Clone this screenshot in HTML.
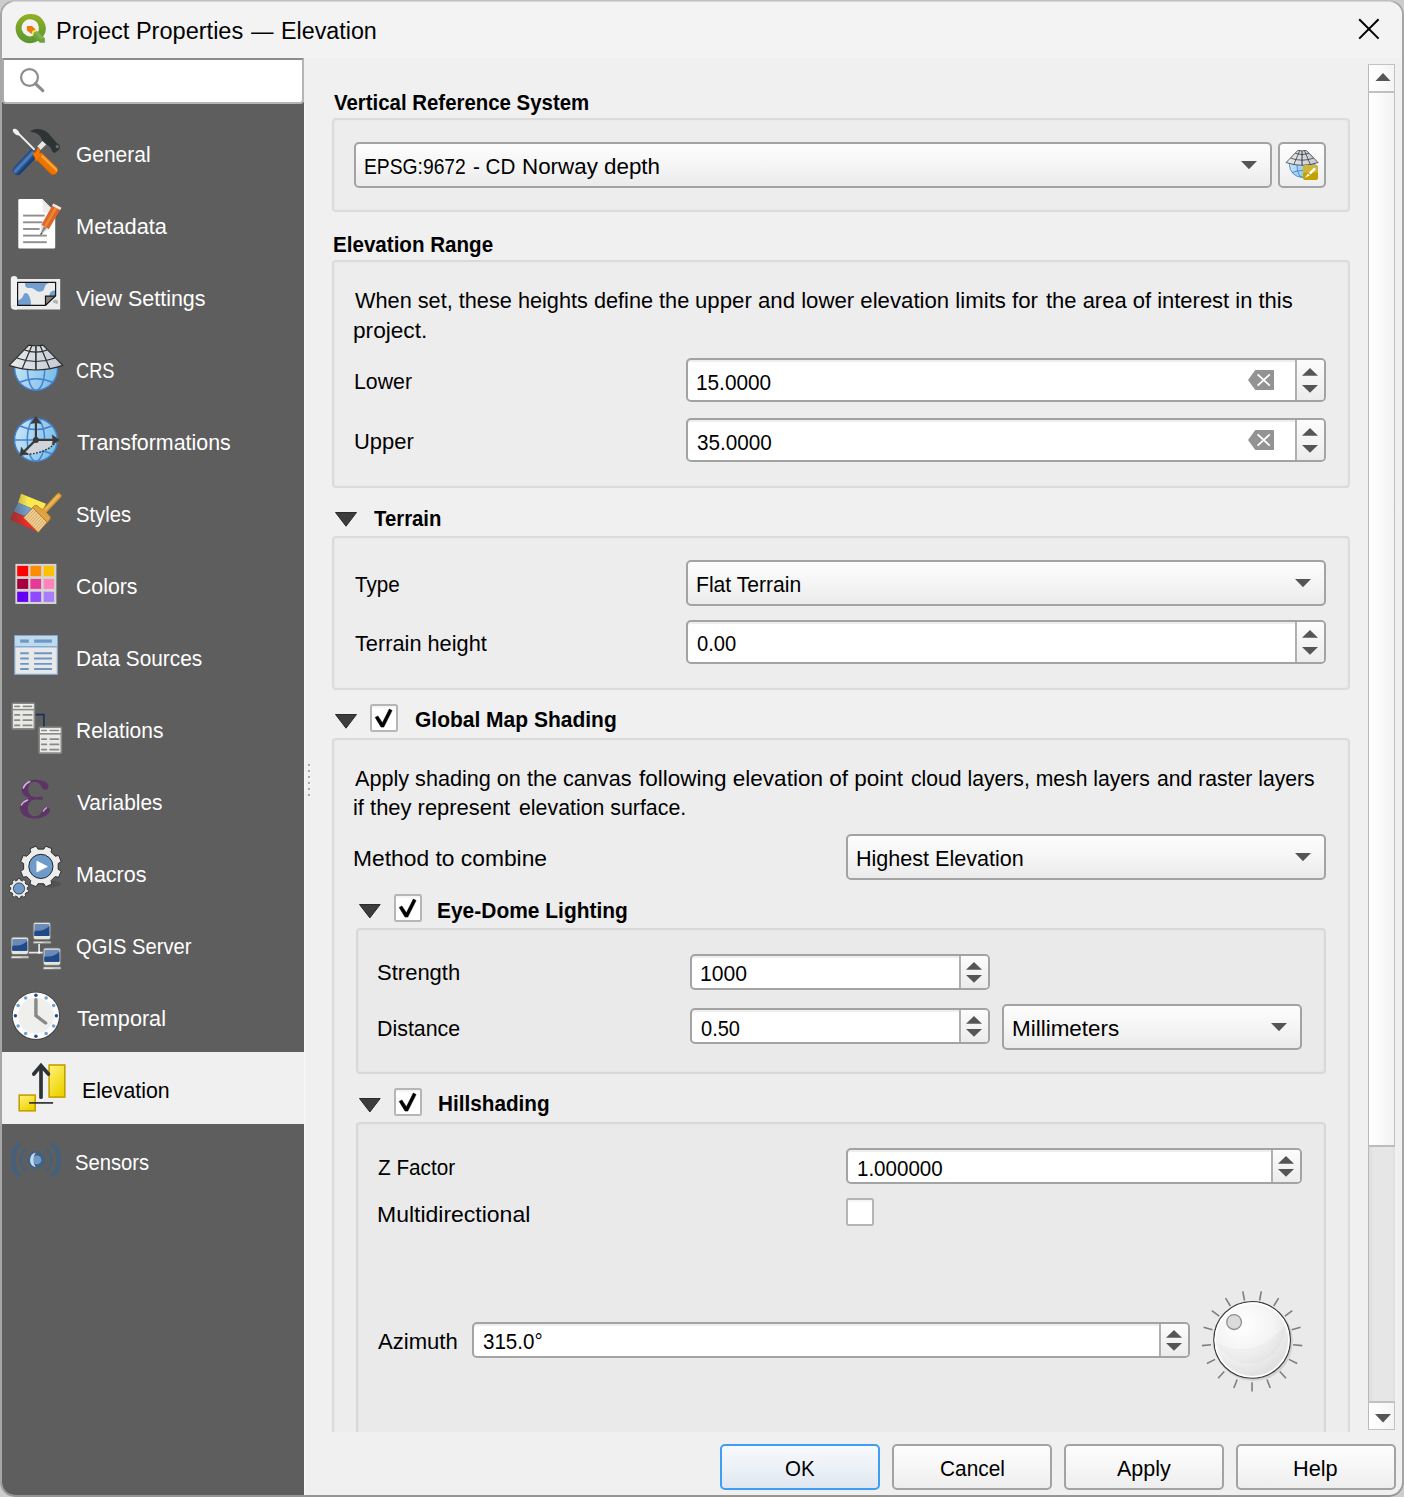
<!DOCTYPE html>
<html>
<head>
<meta charset="utf-8">
<title>Project Properties — Elevation</title>
<style>
html,body{margin:0;padding:0;}
body{width:1404px;height:1497px;overflow:hidden;background:#cdcdcd;font-family:"Liberation Sans",sans-serif;}
#root{position:absolute;left:0;top:0;width:1404px;height:1497px;overflow:hidden;}
#root div,#root span,#root svg{position:absolute;box-sizing:border-box;}
.t{white-space:pre;line-height:1;color:#000;transform-origin:0 0;}
#win{left:0;top:0;width:1404px;height:1497px;border-radius:15px;background:linear-gradient(#c2c2c2 0,#a6a6a6 4px,#a6a6a6 1480px,#949494);overflow:hidden;}
#inner{left:2px;top:2px;width:1400px;height:1492.5px;border-radius:13px;background:#f0f0f0;overflow:hidden;}
#titlebar{left:0;top:0;width:1400px;height:56px;background:#f3f3f3;}
#side{left:0;top:100px;width:302px;height:1400px;background:#5e5e5e;}
#sel{left:0;top:1050px;width:302px;height:72px;background:#f0f0f0;}
#search{left:0;top:56px;width:302px;height:46px;background:#fff;border:2px solid #b4b4b4;border-top:2px solid #8c8c8c;border-left-color:#ababab;border-radius:1px 1px 4px 4px;}
.gb{background:rgba(0,0,0,0.0125);border:2px solid rgba(0,0,0,0.08);border-radius:4px;box-shadow:inset 0 0 3px rgba(0,0,0,0.05);}
.combo{border:2px solid #a3a3a3;border-radius:5px;background:linear-gradient(#fdfdfd,#f6f6f6 45%,#ebebeb);}
.spin{border:2px solid #a3a3a3;border-radius:5px;background:#fff;box-shadow:inset 0 2px 1px rgba(0,0,0,0.07);}
.spin .sb{top:0;right:0;bottom:0;border-left:2px solid #b0b0b0;background:linear-gradient(#fcfcfc,#ececec);border-radius:0 3px 3px 0;}
.btn{border:2px solid #a3a3a3;border-radius:5px;background:linear-gradient(#fdfdfd,#f7f7f7 45%,#eeeeee);}
.cb{width:28px;height:28px;background:#fff;border:2px solid #b6b6b6;border-radius:2.5px;box-shadow:inset 0 2px 1px rgba(0,0,0,0.04);}
</style>
</head>
<body>
<div id="root">
<div id="win"><div id="tb2" style="left:13px;top:1px;width:1378px;height:1px;background:#f3f3f3;opacity:0.55"></div><div id="inner">
<div id="titlebar"></div>
<div id="side"></div>
<div id="sel"></div>
<div id="search"></div>
</div></div>
<!-- scroll area clip: x 304..1397 y 58..1432 -->
<div id="sa" style="left:304px;top:58px;width:1094px;height:1374px;overflow:hidden;">
<div id="sc" style="left:-304px;top:-58px;width:1404px;height:1600px;">
<div class="gb" style="left:332px;top:118px;width:1018px;height:94px;"></div>
<div class="gb" style="left:332px;top:260px;width:1018px;height:228px;"></div>
<div class="gb" style="left:332px;top:536px;width:1018px;height:154px;"></div>
<div class="gb" style="left:332px;top:738px;width:1018px;height:760px;"></div>
<div class="gb" style="left:356px;top:928px;width:970px;height:146px;"></div>
<div class="gb" style="left:356px;top:1122px;width:970px;height:360px;"></div>
</div></div>
<div id="sa2" style="left:304px;top:58px;width:1094px;height:1374px;overflow:hidden;"><div style="left:-304px;top:-58px;width:1404px;height:1600px;">
<div class="combo" style="left:354px;top:142px;width:918.00px;height:46.00px"></div>
<svg style="left:1241.00px;top:160.90px;width:16px;height:8.2px" viewBox="0 0 16 8.2"><path d="M0 0H16L8.0 8.2Z" fill="#555555"/></svg>
<div class="btn" style="left:1278px;top:142px;width:48px;height:46px"></div>
<div class="spin" style="left:686px;top:358px;width:640.00px;height:44.00px"><div class="sb" style="width:29.00px"></div></div>
<svg style="left:1302.00px;top:368.10px;width:16px;height:7.8px" viewBox="0 0 16 7.8"><path d="M0 7.8H16L8.0 0Z" fill="#555555"/></svg>
<svg style="left:1302.00px;top:385.10px;width:16px;height:7.8px" viewBox="0 0 16 7.8"><path d="M0 0H16L8.0 7.8Z" fill="#555555"/></svg>
<svg style="left:1248px;top:370px;width:26px;height:20px" viewBox="0 0 26 20"><path d="M7.3 0H25.6a0.4 0.4 0 0 1 0.4 0.4V19.6a0.4 0.4 0 0 1-0.4 0.4H7.3L0 10Z" fill="#939393"/><path d="M9.6 4.4L21.8 15.6M21.8 4.4L9.6 15.6" stroke="#fff" stroke-width="1.9" fill="none"/></svg>
<div class="spin" style="left:686px;top:418px;width:640.00px;height:44.00px"><div class="sb" style="width:29.00px"></div></div>
<svg style="left:1302.00px;top:428.10px;width:16px;height:7.8px" viewBox="0 0 16 7.8"><path d="M0 7.8H16L8.0 0Z" fill="#555555"/></svg>
<svg style="left:1302.00px;top:445.10px;width:16px;height:7.8px" viewBox="0 0 16 7.8"><path d="M0 0H16L8.0 7.8Z" fill="#555555"/></svg>
<svg style="left:1248px;top:430px;width:26px;height:20px" viewBox="0 0 26 20"><path d="M7.3 0H25.6a0.4 0.4 0 0 1 0.4 0.4V19.6a0.4 0.4 0 0 1-0.4 0.4H7.3L0 10Z" fill="#939393"/><path d="M9.6 4.4L21.8 15.6M21.8 4.4L9.6 15.6" stroke="#fff" stroke-width="1.9" fill="none"/></svg>
<div class="combo" style="left:686px;top:560px;width:640.00px;height:46.00px"></div>
<svg style="left:1295.00px;top:578.90px;width:16px;height:8.2px" viewBox="0 0 16 8.2"><path d="M0 0H16L8.0 8.2Z" fill="#555555"/></svg>
<div class="spin" style="left:686px;top:620px;width:640.00px;height:44.00px"><div class="sb" style="width:29.00px"></div></div>
<svg style="left:1302.00px;top:630.10px;width:16px;height:7.8px" viewBox="0 0 16 7.8"><path d="M0 7.8H16L8.0 0Z" fill="#555555"/></svg>
<svg style="left:1302.00px;top:647.10px;width:16px;height:7.8px" viewBox="0 0 16 7.8"><path d="M0 0H16L8.0 7.8Z" fill="#555555"/></svg>
<div class="combo" style="left:846px;top:834px;width:480.00px;height:46.00px"></div>
<svg style="left:1295.00px;top:852.90px;width:16px;height:8.2px" viewBox="0 0 16 8.2"><path d="M0 0H16L8.0 8.2Z" fill="#555555"/></svg>
<div class="spin" style="left:690px;top:954px;width:300.00px;height:36.00px"><div class="sb" style="width:29.00px"></div></div>
<svg style="left:966.00px;top:962.10px;width:16px;height:7.8px" viewBox="0 0 16 7.8"><path d="M0 7.8H16L8.0 0Z" fill="#555555"/></svg>
<svg style="left:966.00px;top:975.10px;width:16px;height:7.8px" viewBox="0 0 16 7.8"><path d="M0 0H16L8.0 7.8Z" fill="#555555"/></svg>
<div class="spin" style="left:690px;top:1008px;width:300.00px;height:36.00px"><div class="sb" style="width:29.00px"></div></div>
<svg style="left:966.00px;top:1016.10px;width:16px;height:7.8px" viewBox="0 0 16 7.8"><path d="M0 7.8H16L8.0 0Z" fill="#555555"/></svg>
<svg style="left:966.00px;top:1029.10px;width:16px;height:7.8px" viewBox="0 0 16 7.8"><path d="M0 0H16L8.0 7.8Z" fill="#555555"/></svg>
<div class="combo" style="left:1002px;top:1004px;width:300.00px;height:46.00px"></div>
<svg style="left:1271.00px;top:1022.90px;width:16px;height:8.2px" viewBox="0 0 16 8.2"><path d="M0 0H16L8.0 8.2Z" fill="#555555"/></svg>
<div class="spin" style="left:846px;top:1148px;width:456.00px;height:36.00px"><div class="sb" style="width:29.00px"></div></div>
<svg style="left:1278.00px;top:1156.10px;width:16px;height:7.8px" viewBox="0 0 16 7.8"><path d="M0 7.8H16L8.0 0Z" fill="#555555"/></svg>
<svg style="left:1278.00px;top:1169.10px;width:16px;height:7.8px" viewBox="0 0 16 7.8"><path d="M0 0H16L8.0 7.8Z" fill="#555555"/></svg>
<div class="cb" style="left:846px;top:1198px"></div>
<div class="spin" style="left:472px;top:1322px;width:718.00px;height:36.00px"><div class="sb" style="width:29.00px"></div></div>
<svg style="left:1166.00px;top:1330.10px;width:16px;height:7.8px" viewBox="0 0 16 7.8"><path d="M0 7.8H16L8.0 0Z" fill="#555555"/></svg>
<svg style="left:1166.00px;top:1343.10px;width:16px;height:7.8px" viewBox="0 0 16 7.8"><path d="M0 0H16L8.0 7.8Z" fill="#555555"/></svg>
<svg style="left:335px;top:512.3px;width:22px;height:14.700000000000045px" viewBox="0 0 22 14.700000000000045"><path d="M0.5 0.5H21.5L11.0 14.200000000000045Z" fill="#3c3c3c" stroke="#2a2a2a" stroke-width="1" stroke-linejoin="round"/></svg>
<svg style="left:335px;top:714.3px;width:22px;height:14.700000000000045px" viewBox="0 0 22 14.700000000000045"><path d="M0.5 0.5H21.5L11.0 14.200000000000045Z" fill="#3c3c3c" stroke="#2a2a2a" stroke-width="1" stroke-linejoin="round"/></svg>
<svg style="left:359.3px;top:904.2px;width:21.69999999999999px;height:14.399999999999977px" viewBox="0 0 21.69999999999999 14.399999999999977"><path d="M0.5 0.5H21.19999999999999L10.849999999999994 13.899999999999977Z" fill="#3c3c3c" stroke="#2a2a2a" stroke-width="1" stroke-linejoin="round"/></svg>
<svg style="left:359.3px;top:1098.2px;width:21.69999999999999px;height:14.5px" viewBox="0 0 21.69999999999999 14.5"><path d="M0.5 0.5H21.19999999999999L10.849999999999994 14.0Z" fill="#3c3c3c" stroke="#2a2a2a" stroke-width="1" stroke-linejoin="round"/></svg>
<div class="cb" style="left:370px;top:704px"></div>
<svg style="left:370px;top:704px;width:28px;height:28px" viewBox="0 0 28 28"><path d="M5.15 13.4L7.9 11.9L12.4 18.8L19.3 5.0L22.1 6.5L13.8 23.1H11.0Z" fill="#000" stroke="#000" stroke-width="0.5" stroke-linejoin="round"/></svg>
<div class="cb" style="left:394px;top:894px"></div>
<svg style="left:394px;top:894px;width:28px;height:28px" viewBox="0 0 28 28"><path d="M5.15 13.4L7.9 11.9L12.4 18.8L19.3 5.0L22.1 6.5L13.8 23.1H11.0Z" fill="#000" stroke="#000" stroke-width="0.5" stroke-linejoin="round"/></svg>
<div class="cb" style="left:394px;top:1088px"></div>
<svg style="left:394px;top:1088px;width:28px;height:28px" viewBox="0 0 28 28"><path d="M5.15 13.4L7.9 11.9L12.4 18.8L19.3 5.0L22.1 6.5L13.8 23.1H11.0Z" fill="#000" stroke="#000" stroke-width="0.5" stroke-linejoin="round"/></svg>
</div></div>
<div style="left:1368px;top:64px;width:27px;height:1366px;background:linear-gradient(90deg,#dcdcdc 0,#e6e6e6 4px,#e6e6e6 22px,#dedede 27px);border-left:1px solid #b9b9b9"></div>
<div style="left:1368px;top:91px;width:27px;height:1056px;background:linear-gradient(90deg,#ffffff,#fbfbfb 40%,#f2f2f2);border:1px solid #bebebe;border-bottom:2px solid #bcbcbc;border-left-color:#b9b9b9"></div>
<div style="left:1368px;top:64px;width:27px;height:28.8px;background:linear-gradient(90deg,#ffffff,#fbfbfb 40%,#f4f4f4);border:1px solid #c2c2c2;border-bottom:2px solid #c0c0c0;border-left-color:#b9b9b9"></div>
<div style="left:1368px;top:1401px;width:27px;height:29.4px;background:linear-gradient(90deg,#ffffff,#fbfbfb 40%,#f4f4f4);border:1px solid #c2c2c2;border-top:2px solid #c0c0c0;border-left-color:#b9b9b9"></div>
<svg style="left:1375.00px;top:72.75px;width:16px;height:8.5px" viewBox="0 0 16 8.5"><path d="M0 8.5H16L8.0 0Z" fill="#555555"/></svg>
<svg style="left:1375.00px;top:1414.35px;width:16px;height:8.5px" viewBox="0 0 16 8.5"><path d="M0 0H16L8.0 8.5Z" fill="#555555"/></svg>
<div class="btn" style="left:720px;top:1444px;width:160.00px;height:46px;border-color:#3d9ef5;background:linear-gradient(#f7fafd,#edf2f8 45%,#dfe7f0)"></div>
<div class="btn" style="left:892px;top:1444px;width:160.00px;height:46px"></div>
<div class="btn" style="left:1064px;top:1444px;width:160.00px;height:46px"></div>
<div class="btn" style="left:1236px;top:1444px;width:160.00px;height:46px"></div>
<svg style="left:1357px;top:17px;width:24px;height:24px" viewBox="0 0 24 24"><path d="M2.2 2.2L21.6 21.6M21.6 2.2L2.2 21.6" stroke="#000" stroke-width="2" fill="none"/></svg>
<svg style="left:16px;top:64px;width:32px;height:32px" viewBox="0 0 32 32"><circle cx="13.5" cy="13.5" r="8.4" fill="none" stroke="#8c8c8c" stroke-width="2.2"/><path d="M19.4 19.6L26.8 26.7" stroke="#8c8c8c" stroke-width="3.2" stroke-linecap="round"/></svg>
<div style="left:309px;top:765px;width:2px;height:2px;background:#f9f9f9"></div>
<div style="left:308px;top:764px;width:2px;height:2px;background:#a6a6a6"></div>
<div style="left:309px;top:771px;width:2px;height:2px;background:#f9f9f9"></div>
<div style="left:308px;top:770px;width:2px;height:2px;background:#a6a6a6"></div>
<div style="left:309px;top:777px;width:2px;height:2px;background:#f9f9f9"></div>
<div style="left:308px;top:776px;width:2px;height:2px;background:#a6a6a6"></div>
<div style="left:309px;top:783px;width:2px;height:2px;background:#f9f9f9"></div>
<div style="left:308px;top:782px;width:2px;height:2px;background:#a6a6a6"></div>
<div style="left:309px;top:789px;width:2px;height:2px;background:#f9f9f9"></div>
<div style="left:308px;top:788px;width:2px;height:2px;background:#a6a6a6"></div>
<div style="left:309px;top:795px;width:2px;height:2px;background:#f9f9f9"></div>
<div style="left:308px;top:794px;width:2px;height:2px;background:#a6a6a6"></div>
<div style="left:304px;top:104px;width:1px;height:1391px;background:#f8f8f8"></div>
<svg style="left:0;top:0;width:0;height:0"><defs>
<linearGradient id="gGlobe" x1="0" y1="0" x2="1" y2="0.3"><stop offset="0" stop-color="#cfe9fa"/><stop offset="1" stop-color="#7fc0ea"/></linearGradient>
<linearGradient id="gCone" x1="0" y1="0" x2="1" y2="0"><stop offset="0" stop-color="#e9ebef"/><stop offset="0.5" stop-color="#d5d9e0"/><stop offset="1" stop-color="#c4c9d2"/></linearGradient>
<linearGradient id="gYel" x1="0" y1="0" x2="0.6" y2="1"><stop offset="0" stop-color="#fff27e"/><stop offset="1" stop-color="#edd400"/></linearGradient>
<linearGradient id="gBlueH" x1="0" y1="0" x2="1" y2="1"><stop offset="0" stop-color="#3b6db0"/><stop offset="0.35" stop-color="#5a8ac6"/><stop offset="0.6" stop-color="#204a87"/><stop offset="1" stop-color="#173a6e"/></linearGradient>
<linearGradient id="gOrH" x1="0" y1="1" x2="1" y2="0"><stop offset="0" stop-color="#e06a00"/><stop offset="0.45" stop-color="#f57900"/><stop offset="0.7" stop-color="#fcaa3a"/><stop offset="1" stop-color="#ef7400"/></linearGradient>
<linearGradient id="gBlueV" x1="0" y1="0" x2="0" y2="1"><stop offset="0" stop-color="#17386b"/><stop offset="0.3" stop-color="#204a87"/><stop offset="0.62" stop-color="#5484c4"/><stop offset="0.8" stop-color="#3465a4"/><stop offset="1" stop-color="#204a87"/></linearGradient>
<linearGradient id="gOrV" x1="0" y1="0" x2="0" y2="1"><stop offset="0" stop-color="#f08000"/><stop offset="0.25" stop-color="#fdb04a"/><stop offset="0.45" stop-color="#f57900"/><stop offset="0.75" stop-color="#ef7400"/><stop offset="1" stop-color="#e06a00"/></linearGradient>
<linearGradient id="gQ" x1="0" y1="0" x2="0" y2="1"><stop offset="0" stop-color="#93b023"/><stop offset="1" stop-color="#589632"/></linearGradient>
<linearGradient id="gScr" x1="0" y1="0" x2="0" y2="1"><stop offset="0" stop-color="#6e8cba"/><stop offset="0.5" stop-color="#6a88b6"/><stop offset="0.62" stop-color="#244c8a"/><stop offset="1" stop-color="#1f4683"/></linearGradient>
<linearGradient id="gStripe" x1="0" y1="0" x2="1" y2="0"><stop offset="0" stop-color="#3a3a3a" stop-opacity="0.5"/><stop offset="0.75" stop-color="#3a3a3a" stop-opacity="0"/></linearGradient>
<radialGradient id="gDial" cx="0.38" cy="0.3" r="0.75"><stop offset="0" stop-color="#ffffff"/><stop offset="0.55" stop-color="#f3f3f3"/><stop offset="1" stop-color="#dcdcdc"/></radialGradient>
<symbol id="crs" viewBox="0 0 64 64">
<circle cx="32.1" cy="32.8" r="21.4" fill="url(#gGlobe)" stroke="#4581cc" stroke-width="1.5"/>
<ellipse cx="32.1" cy="32.8" rx="8.6" ry="21.4" fill="none" stroke="#4581cc" stroke-width="1.5"/>
<path d="M15 46.5Q32 39 49.2 46.5" fill="none" stroke="#4581cc" stroke-width="1.5"/>
<path d="M24.8 9.1Q32 10.4 39 9.1L58.8 29.4Q32 38.6 5.2 29.4Z" fill="url(#gCone)" stroke="#2c2c2c" stroke-width="1.2" stroke-linejoin="round"/>
<path d="M31.9 10V34" stroke="#3a3a3a" stroke-width="1.7" fill="none"/>
<path d="M27.8 9.8L18.2 32.7M36.2 9.8L45.8 32.7M20.6 14Q32 18.4 43.4 14M12.8 22Q32 29 51.2 22" stroke="#2c2c2c" stroke-width="1.2" fill="none"/>
</symbol>
</defs></svg>
<svg style="left:14.2px;top:13px;width:32px;height:32px" viewBox="0 0 32 32" ><path d="M16.2 1.0A14.6 14.6 0 1 0 16.2 30.2A14.6 14.6 0 0 0 24.5 27.6L19.8 22.6A8.6 8.6 0 1 1 24.8 15.6A8.6 8.6 0 0 1 23.6 20L28.6 24.6A14.6 14.6 0 0 0 16.2 1.0Z" fill="url(#gQ)"/>
<path d="M12.9 12.9H18L21.6 16.6L17.6 21.1L12.9 17.6Z" fill="#ee7913"/>
<path d="M18 12.9L21.6 16.6L18.3 17.9L17.6 21.1L19.2 22.5L20.0 19.4L23.2 18.2Z" fill="#f0e64a"/>
<path d="M23.2 18.2L20.0 19.4L19.2 22.5L25.8 29.7H30.9V25.6Z" fill="#6aa33a"/>
<path d="M23.2 18.2L20.0 19.4L26.5 26.2L30.9 25.6Z" fill="#80b050"/></svg>
<svg style="left:6px;top:122px;width:64px;height:64px" viewBox="0 0 64 64" ><path d="M25 8.6C30 5.8 37.5 6.4 42 11L49.3 19.2C50.6 21 51.6 21.9 53 22.6C54.6 24 54.2 27 52.4 28.3L49.4 30.4C47.6 31.2 46 30 45.6 27.8C44.6 24.6 42.2 23.2 40 22L36.2 18.6C35.4 14 31 10.4 26.4 10.2C25.2 10.1 24.4 9.2 25 8.6Z" fill="#2e3436"/>
<circle cx="51.3" cy="24.6" r="1.6" fill="#6b7072"/>
<path d="M36.4 19.0L40.2 22.4L34.6 28L31.2 24.6Z" fill="#e6e8e4"/>
<g transform="translate(28.6,30.4) rotate(133.4)"><path d="M0 -4.5H24.6A4.5 4.5 0 0 1 24.6 4.5H0Z" fill="url(#gBlueV)" stroke="#173a6e" stroke-width="0.5"/></g>
<path d="M12.6 11.8L28.6 27.8" stroke="#4a4a4a" stroke-width="3" fill="none"/>
<path d="M12.6 11.8L28.6 27.8" stroke="#ececec" stroke-width="2" fill="none"/>
<path d="M7.2 7.2C8.2 6.2 10.2 6.8 11.6 8.2C13 9.4 13.8 11 13.4 12.6L12.4 13.4C11 13.4 9.2 12.4 8 11C6.8 9.8 6.4 8 7.2 7.2Z" fill="#f2f2f2"/>
<g transform="translate(32.4,33.4) rotate(43.8)"><path d="M0 -4H22.4A4.9 4.9 0 0 1 22.4 4.9L0 4.4Z" fill="url(#gOrV)" stroke="#ce5c00" stroke-width="0.5"/><path d="M1 -0.6H23M1 1.4H23" stroke="#cf5f00" stroke-width="0.5" opacity="0.7"/></g>
<path d="M26.4 31.4L29.8 30L32.2 25.2L34.2 28.6L33.6 31.2L36 33L30 39.4L28.4 34.6Z" fill="#f57900" stroke="#ce5c00" stroke-width="0.5" stroke-linejoin="round"/></svg>
<svg style="left:6px;top:194px;width:64px;height:64px" viewBox="0 0 64 64" ><path d="M13.6 5H36.6L49.2 17.8V53.2A1.3 1.3 0 0 1 47.9 54.5H13.6A1.3 1.3 0 0 1 12.3 53.2V6.3A1.3 1.3 0 0 1 13.6 5Z" fill="#ffffff"/>
<path d="M36.6 5L49.2 17.8V18.6H38A1.4 1.4 0 0 1 36.6 17.2Z" fill="#ececec"/>
<path d="M36.5 6.2L48.6 18.4" stroke="#5e5e5e" stroke-width="0.1"/>
<path d="M36.2 4.6L49.6 18.2V4.6Z" fill="#5e5e5e"/>
<path d="M17.1 21.6H38.7" stroke="#8e8e8e" stroke-width="1.9"/><path d="M17.1 28.3H36.4" stroke="#8e8e8e" stroke-width="1.9"/><path d="M17.1 35.0H33.6" stroke="#8e8e8e" stroke-width="1.9"/><path d="M17.1 41.6H40.8" stroke="#8e8e8e" stroke-width="1.9"/><path d="M17.1 48.2H40.8" stroke="#8e8e8e" stroke-width="1.9"/>
<path d="M47.4 9.6L55.4 13.7L42.8 35.2L35.3 31Z" fill="#de6530"/>
<path d="M50.1 11L52.4 12.2L39.9 33.6L37.8 32.4Z" fill="#ee8a26"/>
<path d="M47.4 9.6L55.4 13.7L54.2 15.9L46.1 11.8Z" fill="#ececec"/>
<path d="M35.3 31L42.8 35.2L34.2 41.3Z" fill="#e4e4e4"/>
<path d="M37.6 32.3L40.6 34L34.2 41.3Z" fill="#8a8a8a"/>
<path d="M35.1 38.4L36.6 39.5L34.2 41.3Z" fill="#3a3a3a"/></svg>
<svg style="left:6px;top:266px;width:64px;height:64px" viewBox="0 0 64 64" ><path d="M8 13H54.2V43.5H8Z" fill="#ececec"/>
<path d="M4.8 13.4A3.2 3.2 0 0 1 11.4 13.4V43.5H8.2A3.4 3.4 0 0 1 4.8 40.1Z" fill="#f2f2f2"/>
<path d="M5 40.2Q8 39 11.4 40.3" stroke="#cfcfcf" stroke-width="0.6" fill="none"/>
<path d="M46.5 35.8q2.5-3.4 4.6-1.6q1.4 1.4 0.8 3.4q-1.6 0.8-2.2-0.4q-1.6 0.6-3.2-1.4Z" fill="#b4b4b4"/>
<path d="M11.6 16.3H49.6V29.8L39.6 39.3H11.6Z" fill="#ececec"/>
<path d="M19.2 16.8C18.6 20.6 20.6 22.6 24 22C27.6 21.4 29 24.6 32.4 25.6C36.4 26.4 38.2 24.2 38.6 21.6C39 18.6 41.6 17.6 43 16.8Z" fill="#729fcf"/>
<path d="M12 34.6C15.6 33 17 31.2 17.6 28.6C18.6 26.2 21.4 26.6 22.8 29.4C24.6 32.4 25.2 35.6 24.8 39H12Z" fill="#729fcf"/>
<path d="M49.2 24.6C45.6 24.4 43 27 43.6 30H49.2Z" fill="#729fcf"/>
<path d="M39.6 30.2H49.2L39.6 39.2Z" fill="#808080"/>
<path d="M11.6 16.3H49.6V29.8L39.6 39.3H11.6Z" fill="none" stroke="#141414" stroke-width="1.2" stroke-linejoin="round"/>
<path d="M49.4 30.2H39.5V39.2" fill="none" stroke="#141414" stroke-width="1.2"/></svg>
<svg style="left:4px;top:336px;width:64px;height:64px" viewBox="0 0 64 64"><use href="#crs" width="64" height="64"/></svg>
<svg style="left:4px;top:408px;width:64px;height:64px" viewBox="0 0 64 64" ><circle cx="31.9" cy="31.9" r="21.4" fill="url(#gGlobe)" stroke="#4581cc" stroke-width="1.5"/>
<ellipse cx="31.9" cy="31.9" rx="8.6" ry="21.4" fill="none" stroke="#4581cc" stroke-width="1.5"/>
<path d="M10.5 31.9H53.3M16 18Q32 25.2 47.8 18M16 45.8Q32 38.6 47.8 45.8" fill="none" stroke="#4581cc" stroke-width="1.5"/>
<path d="M31.9 31.9H52.5Q44 44.5 20 46.4Z" fill="#d3d4d8" stroke="none"/>
<path d="M52.5 33.4Q44 44.8 22.5 46.4" fill="none" stroke="#2a2a2a" stroke-width="1.3" stroke-dasharray="1.6 1.6"/>
<path d="M31.9 31.9V13M31.9 31.9H50M31.9 31.9L19.5 44" stroke="#3a3a3a" stroke-width="2.2" fill="none"/>
<circle cx="31.9" cy="31.9" r="3" fill="#3a3a3a"/>
<path d="M31.9 8.6L36.8 15.6Q32 13.8 27 15.6Z" fill="#3a3a3a" stroke="#3a3a3a" stroke-width="0.6" stroke-linejoin="round"/>
<path d="M55.2 31.9L48.2 36.8Q50 32 48.2 27Z" fill="#3a3a3a" stroke="#3a3a3a" stroke-width="0.6" stroke-linejoin="round"/>
<path d="M16 47.6L17.4 39.2Q19.6 43.8 24.4 46Z" fill="#3a3a3a" stroke="#3a3a3a" stroke-width="0.6" stroke-linejoin="round"/></svg>
<svg style="left:4px;top:480px;width:64px;height:64px" viewBox="0 0 64 64" ><path d="M17.1 13.7L42 23.8L39 30L27 28L14 22.8Z" fill="#fce94f"/>
<path d="M14 22.8L27 28L30 31L20 36L9.6 31.5Z" fill="#729fcf"/>
<path d="M9.6 31.5L20 36L34 52L6 39.6Z" fill="#ef2929"/>
<path d="M17.1 13.7L30 19L20 46L6 39.6Z" fill="url(#gStripe)"/>
<path d="M29.2 27.5L43.3 42L34.2 52.4L19.6 37.8Z" fill="#efcf98" stroke="#b07818" stroke-width="0.8" stroke-linejoin="round"/>
<path d="M30.8 29.1L21.2 39.4" stroke="#c9974e" stroke-width="0.7"/><path d="M32.3 30.7L22.8 41.0" stroke="#c9974e" stroke-width="0.7"/><path d="M33.9 32.3L24.5 42.7" stroke="#c9974e" stroke-width="0.7"/><path d="M35.5 33.9L26.1 44.3" stroke="#c9974e" stroke-width="0.7"/><path d="M37.0 35.6L27.7 45.9" stroke="#c9974e" stroke-width="0.7"/><path d="M38.6 37.2L29.3 47.5" stroke="#c9974e" stroke-width="0.7"/><path d="M40.2 38.8L31.0 49.2" stroke="#c9974e" stroke-width="0.7"/><path d="M41.7 40.4L32.6 50.8" stroke="#c9974e" stroke-width="0.7"/>
<path d="M28.6 27.4Q30.4 24.6 33 25.6L37 29Q38.4 29.8 39.4 28.6L52.6 14.2A2.6 2.6 0 0 1 56.6 17.6L42.4 32.4L45.8 36.2Q47 38 45.8 39.6L43.4 42.4Z" fill="#dfa545" stroke="#b07818" stroke-width="0.8" stroke-linejoin="round"/>
<path d="M41.4 29.4L54.6 15.4" stroke="#eec06e" stroke-width="1.2" fill="none"/></svg>
<svg style="left:4px;top:552px;width:64px;height:64px" viewBox="0 0 64 64" ><rect x="11.4" y="11.9" width="41" height="40.1" fill="#d4d4d2"/><rect x="13.2" y="13.9" width="11.0" height="10.3" fill="#ff0000"/><rect x="26.4" y="13.9" width="10.7" height="10.3" fill="#ff8c00"/><rect x="39.7" y="13.9" width="10.4" height="10.3" fill="#ffc000"/><rect x="13.2" y="26.9" width="11.0" height="10.0" fill="#a6003c"/><rect x="26.4" y="26.9" width="10.7" height="10.0" fill="#e63a96"/><rect x="39.7" y="26.9" width="10.4" height="10.0" fill="#ff82b8"/><rect x="13.2" y="39.7" width="11.0" height="10.2" fill="#6400f5"/><rect x="26.4" y="39.7" width="10.7" height="10.2" fill="#8f4bff"/><rect x="39.7" y="39.7" width="10.4" height="10.2" fill="#a87ffa"/></svg>
<svg style="left:4px;top:624px;width:64px;height:64px" viewBox="0 0 64 64" ><rect x="10.8" y="11.7" width="42.5" height="38.6" fill="#e8e8e8" stroke="#86acd6" stroke-width="1.1"/><rect x="11.3" y="12.2" width="41.5" height="10" fill="#bddbef"/><path d="M10.8 22.8H53.3" stroke="#86acd6" stroke-width="1.6"/><rect x="16.2" y="15.5" width="8.6" height="3.2" fill="#7098c4"/><rect x="30.1" y="15.5" width="17.8" height="3.2" fill="#7098c4"/><path d="M16.2 29.2H24.8M30.1 29.2H47.9" stroke="#6a96c8" stroke-width="1.9"/><path d="M16.2 34.5H24.8M30.1 34.5H47.9" stroke="#6a96c8" stroke-width="1.9"/><path d="M16.2 39.9H24.8M30.1 39.9H47.9" stroke="#6a96c8" stroke-width="1.9"/><path d="M16.2 45.0H24.8M30.1 45.0H47.9" stroke="#6a96c8" stroke-width="1.9"/></svg>
<svg style="left:4px;top:696px;width:64px;height:64px" viewBox="0 0 64 64" ><rect x="8.3" y="7.2" width="22.1" height="25.7" rx="0.8" fill="#e9e9e8" stroke="#888a85" stroke-width="1.6"/><rect x="9.2" y="8.1" width="20.3" height="5" fill="#f4f4f3"/><path d="M7.7 13.600000000000001H31.0" stroke="#888a85" stroke-width="1.6"/><path d="M10.9 10.3H15.5M19.3 10.3H27.6" stroke="#888a85" stroke-width="1.7" stroke-linecap="round"/><path d="M10.9 18.9H15.5M19.3 18.9H27.6" stroke="#888a85" stroke-width="1.7" stroke-linecap="round"/><path d="M10.9 24.200000000000003H15.5M19.3 24.200000000000003H27.6" stroke="#888a85" stroke-width="1.7" stroke-linecap="round"/><path d="M10.9 29.4H15.5M19.3 29.4H27.6" stroke="#888a85" stroke-width="1.7" stroke-linecap="round"/><rect x="35.199999999999996" y="31.400000000000002" width="22.1" height="25.7" rx="0.8" fill="#e9e9e8" stroke="#888a85" stroke-width="1.6"/><rect x="36.1" y="32.300000000000004" width="20.3" height="5" fill="#f4f4f3"/><path d="M34.6 37.800000000000004H57.9" stroke="#888a85" stroke-width="1.6"/><path d="M37.8 34.5H42.4M46.2 34.5H54.5" stroke="#888a85" stroke-width="1.7" stroke-linecap="round"/><path d="M37.8 43.1H42.4M46.2 43.1H54.5" stroke="#888a85" stroke-width="1.7" stroke-linecap="round"/><path d="M37.8 48.400000000000006H42.4M46.2 48.400000000000006H54.5" stroke="#888a85" stroke-width="1.7" stroke-linecap="round"/><path d="M37.8 53.6H42.4M46.2 53.6H54.5" stroke="#888a85" stroke-width="1.7" stroke-linecap="round"/><path d="M31.6 18.7H39.9V30.4" fill="none" stroke="#1b3455" stroke-width="1.7"/></svg>
<svg style="left:4px;top:768px;width:64px;height:64px" viewBox="0 0 64 64" ><path d="M44.5 18.5C44.5 14 38 11.8 31 11.8C23 11.8 17.8 16 17.8 22C17.8 26 21 28.8 25.5 29.8C20 31 16 35 16 40C16 46.5 22 50.4 31 50.4C40 50.4 46 46 46 42.5C46 40.5 44.5 39 42.5 39C40 39 38.5 41 38 43C37 46.5 34 48.3 30.5 48.3C26.5 48.3 24 45 24 40.5C24 35 27 31.6 32 31.6L37.5 31.8C39.6 31.8 39.6 28.8 37.5 28.8L32 28.9C27 28.9 24.3 26 24.3 21.5C24.3 17 27 13.8 30.5 13.8C34 13.8 36.5 16 37.5 18.5C38.5 21 40 21.8 41.5 21.8C43.5 21.8 44.5 20.5 44.5 18.5Z" fill="#5c3566"/>
<path d="M19.4 19.8Q21 15.6 25.6 13.6" stroke="#cdb0d6" stroke-width="1.8" fill="none" stroke-linecap="round"/>
<path d="M17.4 37Q19 33.8 23.6 32" stroke="#cdb0d6" stroke-width="1.5" fill="none" stroke-linecap="round"/>
<path d="M39.4 43Q40.4 40.8 42.4 39.8" stroke="#cdb0d6" stroke-width="1.5" fill="none" stroke-linecap="round"/></svg>
<svg style="left:4px;top:840px;width:64px;height:64px" viewBox="0 0 64 64" ><ellipse cx="47" cy="44" rx="10" ry="3.4" fill="#000" opacity="0.12"/>
<path d="M54.16 29.27L57.13 31.26L54.63 37.27L51.14 36.57L47.07 40.64L47.77 44.13L41.76 46.63L39.77 43.66L34.03 43.66L32.04 46.63L26.03 44.13L26.73 40.64L22.66 36.57L19.17 37.27L16.67 31.26L19.64 29.27L19.64 23.53L16.67 21.54L19.17 15.53L22.66 16.23L26.73 12.16L26.03 8.67L32.04 6.17L34.03 9.14L39.77 9.14L41.76 6.17L47.77 8.67L47.07 12.16L51.14 16.23L54.63 15.53L57.13 21.54L54.16 23.53Z" fill="#ededed" stroke="#262626" stroke-width="0.9" stroke-linejoin="round"/>
<circle cx="36.9" cy="26.4" r="12.1" fill="#6e9bc9" stroke="#161616" stroke-width="0.9"/>
<path d="M32.8 21V32.1L43.5 26.6Z" fill="#fff" stroke="#fff" stroke-width="0.6" stroke-linejoin="round"/>
<path d="M23.25 49.44L24.72 50.36L23.96 52.72L22.22 52.59L21.12 54.11L21.78 55.72L19.77 57.18L18.44 56.05L16.66 56.63L16.24 58.32L13.76 58.32L13.34 56.63L11.56 56.05L10.23 57.18L8.22 55.72L8.88 54.11L7.78 52.59L6.04 52.72L5.28 50.36L6.75 49.44L6.75 47.56L5.28 46.64L6.04 44.28L7.78 44.41L8.88 42.89L8.22 41.28L10.23 39.82L11.56 40.95L13.34 40.37L13.76 38.68L16.24 38.68L16.66 40.37L18.44 40.95L19.77 39.82L21.78 41.28L21.12 42.89L22.22 44.41L23.96 44.28L24.72 46.64L23.25 47.56Z" fill="#ededed" stroke="#262626" stroke-width="0.8" stroke-linejoin="round"/>
<circle cx="15" cy="48.5" r="5.6" fill="#6e9bc9" stroke="#161616" stroke-width="0.7"/></svg>
<svg style="left:4px;top:912px;width:64px;height:64px" viewBox="0 0 64 64" ><path d="M35.1 31.8V40.6M24.8 40.6H39.2" stroke="#e8e8e8" stroke-width="1.7" fill="none"/><rect x="34" y="39.6" width="2.2" height="2" fill="#fff"/><rect x="29.2" y="10.3" width="17.5" height="17.4" rx="2.4" fill="#e3e5df" stroke="#6d6f6a" stroke-width="0.9"/><rect x="30.4" y="12.100000000000001" width="15" height="11.9" rx="0.8" fill="url(#gScr)"/><path d="M30.4 19.9Q40.2 19.3 45.4 14.100000000000001V23.5Q45.4 24.0 44.8 24.0H31.0Q30.4 24.0 30.4 23.5Z" fill="#204a87"/><rect x="29.2" y="29.2" width="17.7" height="2.4" fill="#dfe1db" stroke="#6d6f6a" stroke-width="0.6"/><rect x="39.2" y="29.8" width="7" height="1.2" fill="#b8bab4"/><rect x="7.1" y="25.1" width="17.5" height="17.4" rx="2.4" fill="#e3e5df" stroke="#6d6f6a" stroke-width="0.9"/><rect x="8.299999999999999" y="26.900000000000002" width="15" height="11.9" rx="0.8" fill="url(#gScr)"/><path d="M8.299999999999999 34.7Q18.1 34.1 23.299999999999997 28.900000000000002V38.3Q23.299999999999997 38.8 22.7 38.8H8.9Q8.299999999999999 38.8 8.299999999999999 38.3Z" fill="#204a87"/><rect x="7.1" y="44.0" width="17.7" height="2.4" fill="#dfe1db" stroke="#6d6f6a" stroke-width="0.6"/><rect x="17.1" y="44.6" width="7" height="1.2" fill="#b8bab4"/><rect x="39.2" y="36" width="17.5" height="17.4" rx="2.4" fill="#e3e5df" stroke="#6d6f6a" stroke-width="0.9"/><rect x="40.400000000000006" y="37.8" width="15" height="11.9" rx="0.8" fill="url(#gScr)"/><path d="M40.400000000000006 45.6Q50.2 45 55.400000000000006 39.8V49.2Q55.400000000000006 49.7 54.800000000000004 49.7H41.0Q40.400000000000006 49.7 40.400000000000006 49.2Z" fill="#204a87"/><rect x="39.2" y="54.9" width="17.7" height="2.4" fill="#dfe1db" stroke="#6d6f6a" stroke-width="0.6"/><rect x="49.2" y="55.5" width="7" height="1.2" fill="#b8bab4"/></svg>
<svg style="left:4px;top:984px;width:64px;height:64px" viewBox="0 0 64 64" ><circle cx="31.9" cy="31.9" r="24.2" fill="#3c3c3c" opacity="0.75"/><circle cx="31.9" cy="31.7" r="23.2" fill="#fcfcfc"/><circle cx="31.9" cy="31.7" r="18" fill="#efefed"/><circle cx="31.90" cy="11.20" r="1.75" fill="#204a87"/><circle cx="42.15" cy="13.95" r="1.75" fill="#729fcf"/><circle cx="49.65" cy="21.45" r="1.75" fill="#729fcf"/><circle cx="52.40" cy="31.70" r="1.75" fill="#204a87"/><circle cx="49.65" cy="41.95" r="1.75" fill="#729fcf"/><circle cx="42.15" cy="49.45" r="1.75" fill="#729fcf"/><circle cx="31.90" cy="52.20" r="1.75" fill="#204a87"/><circle cx="21.65" cy="49.45" r="1.75" fill="#729fcf"/><circle cx="14.15" cy="41.95" r="1.75" fill="#729fcf"/><circle cx="11.40" cy="31.70" r="1.75" fill="#204a87"/><circle cx="14.15" cy="21.45" r="1.75" fill="#729fcf"/><circle cx="21.65" cy="13.95" r="1.75" fill="#729fcf"/><path d="M31.9 15.6V31.7L41.6 39" stroke="#888a85" stroke-width="3.4" fill="none" stroke-linecap="round" stroke-linejoin="round"/></svg>
<svg style="left:10px;top:1056px;width:64px;height:64px" viewBox="0 0 64 64" ><rect x="9.2" y="39.1" width="16" height="15.7" fill="url(#gYel)" stroke="#c4a000" stroke-width="1.6"/>
<rect x="39.1" y="9" width="15.7" height="32.1" fill="url(#gYel)" stroke="#c4a000" stroke-width="1.6"/>
<path d="M31 13V41.2" stroke="#2e3436" stroke-width="3.7" stroke-linecap="round" fill="none"/>
<path d="M23.8 18L31 9.6L38.4 18" stroke="#2e3436" stroke-width="3.7" stroke-linecap="round" stroke-linejoin="miter" fill="none"/>
<path d="M19.1 46.9H43.1" stroke="#2e3436" stroke-width="1.7" fill="none"/></svg>
<svg style="left:4px;top:1128px;width:64px;height:64px" viewBox="0 0 64 64" ><path d="M15.60 48.30A23.2 23.2 0 0 1 15.60 15.50" stroke="#43607f" stroke-width="4.4" fill="none"/><path d="M48.40 15.50A23.2 23.2 0 0 1 48.40 48.30" stroke="#43607f" stroke-width="4.4" fill="none"/><path d="M21.63 43.02A15.2 15.2 0 0 1 21.63 20.78" stroke="#43607f" stroke-width="2.1" fill="none" stroke-linecap="round"/><path d="M42.37 20.78A15.2 15.2 0 0 1 42.37 43.02" stroke="#43607f" stroke-width="2.1" fill="none" stroke-linecap="round"/><circle cx="32.1" cy="31.9" r="9.1" fill="#43607f"/><circle cx="33" cy="31.9" r="4.4" fill="#6f9bc9"/><path d="M31.6 24.8A7.4 7.4 0 0 0 31.6 39A9.4 9.4 0 0 1 31.6 24.8Z" fill="#c6d9ef"/><path d="M31.6 24.8A7.4 7.4 0 0 0 31.6 39A13 13 0 0 1 31.6 24.8Z" fill="#c6d9ef"/></svg>
<svg style="left:1282.9px;top:144.6px;width:38.2px;height:38.2px" viewBox="0 0 64 64"><use href="#crs" width="64" height="64"/></svg>
<svg style="left:1303.2px;top:165px;width:15px;height:15px" viewBox="0 0 15 15"><rect x="0" y="0" width="15" height="15" rx="2.6" fill="#c4a000"/><path d="M2.6 0H12.4A2.6 2.6 0 0 1 15 2.6V7.4H0V2.6A2.6 2.6 0 0 1 2.6 0Z" fill="#d2b536"/>
<path d="M11.2 2.4L13 4.2L7.6 9.6L5.8 7.8Z" fill="#fff"/><path d="M5 8.6L6.8 10.4L1.9 12.8Z" fill="#fff"/></svg>
<svg style="left:1196px;top:1284px;width:112px;height:112px" viewBox="0 0 112 112"><path d="M56.05 98.20L56.05 107.40" stroke="#7e7e7e" stroke-width="1.6"/><path d="M41.17 95.42L37.84 104.00" stroke="#7e7e7e" stroke-width="1.6"/><path d="M28.29 87.45L22.10 94.25" stroke="#7e7e7e" stroke-width="1.6"/><path d="M19.17 75.36L10.93 79.47" stroke="#7e7e7e" stroke-width="1.6"/><path d="M15.03 60.80L5.86 61.65" stroke="#7e7e7e" stroke-width="1.6"/><path d="M16.42 45.73L7.57 43.21" stroke="#7e7e7e" stroke-width="1.6"/><path d="M23.17 32.17L15.83 26.63" stroke="#7e7e7e" stroke-width="1.6"/><path d="M34.36 21.97L29.52 14.15" stroke="#7e7e7e" stroke-width="1.6"/><path d="M48.48 16.50L46.79 7.46" stroke="#7e7e7e" stroke-width="1.6"/><path d="M63.62 16.50L65.31 7.46" stroke="#7e7e7e" stroke-width="1.6"/><path d="M77.74 21.97L82.58 14.15" stroke="#7e7e7e" stroke-width="1.6"/><path d="M88.93 32.17L96.27 26.63" stroke="#7e7e7e" stroke-width="1.6"/><path d="M95.68 45.73L104.53 43.21" stroke="#7e7e7e" stroke-width="1.6"/><path d="M97.07 60.80L106.24 61.65" stroke="#7e7e7e" stroke-width="1.6"/><path d="M92.93 75.36L101.17 79.47" stroke="#7e7e7e" stroke-width="1.6"/><path d="M83.81 87.45L90.00 94.25" stroke="#7e7e7e" stroke-width="1.6"/><path d="M70.93 95.42L74.26 104.00" stroke="#7e7e7e" stroke-width="1.6"/><circle cx="57.30" cy="57.50" r="39.6" fill="#000" opacity="0.10"/><circle cx="56.10" cy="55.90" r="38.3" fill="url(#gDial)" stroke="#3e3e3e" stroke-width="1.3"/><circle cx="56.10" cy="55.90" r="36.8" fill="none" stroke="#fff" stroke-width="1.6"/><path d="M20.10 57.90Q56.10 77.90 89.10 41.90A36 36 0 0 1 20.10 57.90Z" fill="#000" opacity="0.022"/><circle cx="38.10" cy="38.10" r="7.4" fill="#dbdbdb" stroke="#8e8e8e" stroke-width="1.3"/></svg>

<!-- text -->
<span class="t" style="left:56.00px;top:19.60px;font-size:23.5px;transform:scaleX(1.0026);">Project Properties</span>
<span class="t" style="left:250.75px;top:19.60px;font-size:23.5px;transform:scaleX(0.9583);">—</span>
<span class="t" style="left:281.01px;top:19.60px;font-size:23.5px;transform:scaleX(0.9910);">Elevation</span>
<span class="t" style="left:76.07px;top:143.60px;font-size:22.5px;transform:scaleX(0.9315);color:#fff;">General</span>
<span class="t" style="left:76.03px;top:215.60px;font-size:22.5px;transform:scaleX(0.9700);color:#fff;">Metadata</span>
<span class="t" style="left:76.25px;top:287.60px;font-size:22.5px;transform:scaleX(0.9527);color:#fff;">View Settings</span>
<span class="t" style="left:76.09px;top:359.60px;font-size:22.5px;transform:scaleX(0.8099);color:#fff;">CRS</span>
<span class="t" style="left:77.00px;top:431.60px;font-size:22.5px;transform:scaleX(0.9506);color:#fff;">Transformations</span>
<span class="t" style="left:75.90px;top:503.60px;font-size:22.5px;transform:scaleX(0.8980);color:#fff;">Styles</span>
<span class="t" style="left:76.05px;top:575.60px;font-size:22.5px;transform:scaleX(0.9456);color:#fff;">Colors</span>
<span class="t" style="left:76.07px;top:647.60px;font-size:22.5px;transform:scaleX(0.9255);color:#fff;">Data Sources</span>
<span class="t" style="left:76.07px;top:719.60px;font-size:22.5px;transform:scaleX(0.9319);color:#fff;">Relations</span>
<span class="t" style="left:76.80px;top:791.60px;font-size:22.5px;transform:scaleX(0.9273);color:#fff;">Variables</span>
<span class="t" style="left:76.04px;top:863.60px;font-size:22.5px;transform:scaleX(0.9550);color:#fff;">Macros</span>
<span class="t" style="left:75.90px;top:935.60px;font-size:22.5px;transform:scaleX(0.8960);color:#fff;">QGIS Server</span>
<span class="t" style="left:77.00px;top:1007.60px;font-size:22.5px;transform:scaleX(0.9613);color:#fff;">Temporal</span>
<span class="t" style="left:82.05px;top:1079.60px;font-size:22.5px;transform:scaleX(0.9473);">Elevation</span>
<span class="t" style="left:75.30px;top:1151.70px;font-size:22.5px;transform:scaleX(0.8980);color:#fff;">Sensors</span>
<span class="t" style="left:333.75px;top:92.00px;font-size:22.5px;transform:scaleX(0.9067);font-weight:700;">Vertical Reference System</span>
<span class="t" style="left:363.64px;top:155.75px;font-size:22.5px;transform:scaleX(0.8567);">EPSG:9672</span>
<span class="t" style="left:472.83px;top:155.75px;font-size:22.5px;transform:scaleX(0.9168);">- CD</span>
<span class="t" style="left:522.01px;top:155.75px;font-size:22.5px;transform:scaleX(0.9941);">Norway depth</span>
<span class="t" style="left:332.84px;top:234.00px;font-size:22.5px;transform:scaleX(0.9148);font-weight:700;">Elevation Range</span>
<span class="t" style="left:354.50px;top:290.00px;font-size:22.5px;transform:scaleX(0.9647);">When set, these heights define the</span>
<span class="t" style="left:695.01px;top:290.00px;font-size:22.5px;transform:scaleX(0.9865);">upper and lower elevation limits for</span>
<span class="t" style="left:1045.75px;top:290.00px;font-size:22.5px;transform:scaleX(0.9765);">the area of interest in this</span>
<span class="t" style="left:353.49px;top:320.00px;font-size:22.5px;transform:scaleX(1.0065);">project.</span>
<span class="t" style="left:353.55px;top:370.90px;font-size:22.5px;transform:scaleX(0.9459);">Lower</span>
<span class="t" style="left:696.33px;top:371.50px;font-size:22.5px;transform:scaleX(0.9240);">15.0000</span>
<span class="t" style="left:353.53px;top:430.90px;font-size:22.5px;transform:scaleX(0.9747);">Upper</span>
<span class="t" style="left:696.75px;top:431.50px;font-size:22.5px;transform:scaleX(0.9187);">35.0000</span>
<span class="t" style="left:373.75px;top:507.50px;font-size:22.5px;transform:scaleX(0.9037);font-weight:700;">Terrain</span>
<span class="t" style="left:354.50px;top:574.00px;font-size:22.5px;transform:scaleX(0.9168);">Type</span>
<span class="t" style="left:695.81px;top:574.00px;font-size:22.5px;transform:scaleX(0.9390);">Flat Terrain</span>
<span class="t" style="left:354.50px;top:633.25px;font-size:22.5px;transform:scaleX(0.9666);">Terrain height</span>
<span class="t" style="left:696.75px;top:633.25px;font-size:22.5px;transform:scaleX(0.8954);">0.00</span>
<span class="t" style="left:414.50px;top:709.00px;font-size:22.5px;transform:scaleX(0.9327);font-weight:700;">Global Map Shading</span>
<span class="t" style="left:354.50px;top:767.50px;font-size:22.5px;transform:scaleX(0.9610);">Apply shading on the canvas</span>
<span class="t" style="left:638.75px;top:767.50px;font-size:22.5px;transform:scaleX(1.0003);">following elevation of point</span>
<span class="t" style="left:911.00px;top:767.50px;font-size:22.5px;transform:scaleX(0.9405);">cloud layers, mesh layers</span>
<span class="t" style="left:1157.00px;top:767.50px;font-size:22.5px;transform:scaleX(0.9407);">and raster layers</span>
<span class="t" style="left:353.33px;top:797.00px;font-size:22.5px;transform:scaleX(0.9743);">if they represent</span>
<span class="t" style="left:518.75px;top:797.00px;font-size:22.5px;transform:scaleX(0.9480);">elevation surface.</span>
<span class="t" style="left:353.49px;top:847.50px;font-size:22.5px;transform:scaleX(1.0140);">Method to combine</span>
<span class="t" style="left:855.79px;top:847.50px;font-size:22.5px;transform:scaleX(0.9577);">Highest Elevation</span>
<span class="t" style="left:437.32px;top:899.50px;font-size:22.5px;transform:scaleX(0.9311);font-weight:700;">Eye-Dome Lighting</span>
<span class="t" style="left:377.27px;top:962.00px;font-size:22.5px;transform:scaleX(0.9785);">Strength</span>
<span class="t" style="left:700.06px;top:962.75px;font-size:22.5px;transform:scaleX(0.9374);">1000</span>
<span class="t" style="left:377.30px;top:1017.50px;font-size:22.5px;transform:scaleX(0.9503);">Distance</span>
<span class="t" style="left:700.50px;top:1017.50px;font-size:22.5px;transform:scaleX(0.8896);">0.50</span>
<span class="t" style="left:1011.50px;top:1017.50px;font-size:22.5px;transform:scaleX(0.9976);">Millimeters</span>
<span class="t" style="left:437.83px;top:1093.25px;font-size:22.5px;transform:scaleX(0.9204);font-weight:700;">Hillshading</span>
<span class="t" style="left:378.25px;top:1156.75px;font-size:22.5px;transform:scaleX(0.9197);">Z Factor</span>
<span class="t" style="left:857.09px;top:1157.50px;font-size:22.5px;transform:scaleX(0.9125);">1.000000</span>
<span class="t" style="left:377.23px;top:1203.75px;font-size:22.5px;transform:scaleX(1.0215);">Multidirectional</span>
<span class="t" style="left:378.25px;top:1331.25px;font-size:22.5px;transform:scaleX(0.9813);">Azimuth</span>
<span class="t" style="left:483.00px;top:1331.25px;font-size:22.5px;transform:scaleX(0.9136);">315.0°</span>
<span class="t" style="left:785.09px;top:1457.50px;font-size:22.5px;transform:scaleX(0.9127);">OK</span>
<span class="t" style="left:939.57px;top:1457.50px;font-size:22.5px;transform:scaleX(0.9259);">Cancel</span>
<span class="t" style="left:1116.75px;top:1457.50px;font-size:22.5px;transform:scaleX(0.9556);">Apply</span>
<span class="t" style="left:1293.28px;top:1457.50px;font-size:22.5px;transform:scaleX(0.9662);">Help</span>
</div>
</body>
</html>
